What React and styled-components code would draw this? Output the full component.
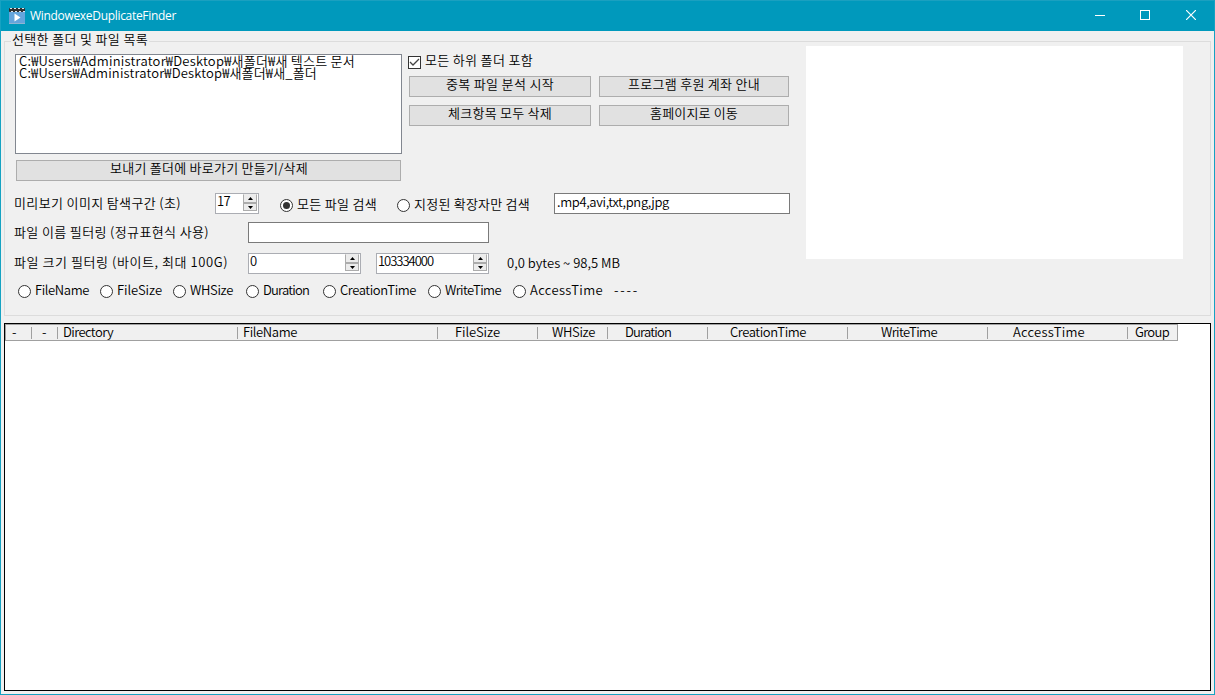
import React, { useLayoutEffect, useRef, useState } from "react"
import styled, { createGlobalStyle } from "styled-components"

const GlobalStyle = createGlobalStyle`
  * {
    box-sizing: border-box;
  }
  body {
    margin: 0;
    overflow: hidden;
    background: #f0f0f0;
    color: #000;
    font-family: "Noto Sans CJK KR", "Noto Sans", sans-serif;
    font-size: 13px;
    font-weight: 350;
    line-height: 16px;
  }
`

const Window = styled.div`
  width: 1215px;
  height: 695px;
  display: flex;
  flex-direction: column;
  background: #f0f0f0;
  border: 1px solid #16a2c2;
  border-top: none;
`
const TitleBar = styled.div`
  height: 31px;
  flex: none;
  display: flex;
  align-items: center;
  padding: 0 0 1px 8px;
  background: #0099bc;
  border-top: 1px solid #1aa0c0;
  color: #fff;
  font-family: "Open Sans", "Noto Sans", sans-serif;
  font-size: 12px;
  font-weight: 400;
`
const Title = styled.div`
  flex: 1;
  margin-left: 5px;
  padding-top: 1px;
`
const WindowButton = styled.div`
  width: 46px;
  height: 28px;
  display: flex;
  align-items: center;
  justify-content: center;
`
const CaptionIcon = styled.svg`
  display: block;
  margin-bottom: 1px;
`
const Client = styled.div`
  flex: 1;
  display: flex;
  flex-direction: column;
  padding: 1px 3px 3px;
`

const GroupBox = styled.fieldset`
  height: 284px;
  margin: 0 0 7px;
  padding: 0;
  border: 1px solid #dcdcdc;
`
const Legend = styled.legend`
  height: 19px;
  margin-left: 6px;
  padding: 0 1px;
  line-height: 13px;
`
const Panel = styled.div`
  display: flex;
`
const Controls = styled.div`
  width: 801px;
  display: flex;
  flex-direction: column;
`
const Preview = styled.div`
  width: 377px;
  height: 213px;
  margin-top: -5px;
  background: #fff;
`

const TopArea = styled.div`
  height: 142px;
  display: flex;
  padding: 3px 0 0 10px;
`
const ListColumn = styled.div`
  width: 387px;
  display: flex;
  flex-direction: column;
  gap: 6px;
`
const ListBox = styled.div`
  height: 100px;
  padding: 0 0 0 3px;
  background: #fff;
  border: 1px solid #828790;
`
const ListItem = styled.div`
  height: 12px;
  line-height: 12px;
`
const Button = styled.div`
  width: ${props => props.$width}px;
  height: 21px;
  display: flex;
  justify-content: center;
  background: #e1e1e1;
  border: 1px solid #adadad;
  line-height: 13px;
`
const SendToButton = styled(Button)`
  margin-left: 1px;
  padding-left: 1px;
`
const Actions = styled.div`
  padding: 2px 0 0 6px;
`
const CheckRow = styled.div`
  height: 20px;
  display: flex;
  gap: 4px;
  line-height: 8px;
`
const CheckMark = styled.svg`
  width: 13px;
  height: 13px;
  flex: none;
`
const ButtonGrid = styled.div`
  display: grid;
  grid-template-columns: 182px 190px;
  gap: 8px;
  margin-left: 1px;
`

const Row = styled.div`
  height: ${props => props.$height}px;
  display: flex;
  padding-left: 9px;
`
const Label = styled.div`
  width: ${props => props.$width}px;
  padding-top: ${props => props.$top || 0}px;
`
const TextBox = styled.div`
  width: ${props => props.$width}px;
  height: 21px;
  padding-left: 2px;
  background: #fff;
  border: 1px solid #7a7a7a;
`
const SpinBox = styled.div`
  width: ${props => props.$width}px;
  height: 21px;
  margin-right: ${props => props.$after}px;
  padding: 0 1px;
  display: flex;
  justify-content: space-between;
  background: #fff;
  border: 1px solid #abadb3;
  line-height: 13px;
`
const SpinButtons = styled.div`
  width: 14px;
  height: 17px;
`
const SpinButton = styled.div`
  height: ${props => (props.$up ? 9 : 8)}px;
  display: flex;
  align-items: center;
  justify-content: center;
  background: #ececec;
  border: 1px solid #acacac;
  border-top-color: ${props => (props.$up ? "#ececec" : "#acacac")};
`
const Option = styled.div`
  width: ${props => props.$width}px;
  display: flex;
  gap: 4px;
`
const OptionText = styled.div`
  margin-top: -3px;
`
const Circle = styled.div`
  width: 13px;
  height: 13px;
  flex: none;
  display: flex;
  align-items: center;
  justify-content: center;
  background: #fff;
  border: 1px solid #333;
  border-radius: 50%;
`
const Dot = styled.div`
  width: 7px;
  height: 7px;
  background: #333;
  border-radius: 50%;
`
const SearchOptions = styled.div`
  display: flex;
  padding-top: 6px;
`
const SortRow = styled(Row)`
  padding-left: 13px;
`

const Table = styled.div`
  height: 368px;
  background: #fff;
  border: 1px solid #000;
`
const TableHeader = styled.div`
  width: 1173px;
  height: 17px;
  display: flex;
  background: #f0f0f0;
  border: 1px solid #a0a0a0;
`
const HeaderCell = styled.div`
  width: ${props => props.$width}px;
  height: 12px;
  flex: none;
  margin-top: 2px;
  padding-left: ${props => props.$pad}px;
  border-right: ${props => (props.$last ? "none" : "1px solid #a0a0a0")};
  line-height: 9px;
`

const Fitted = styled.span`
  display: inline-block;
  white-space: pre;
`

// spreads the letters so that the text is exactly `width` pixels wide
const Fit = ({ width, children }) => {
  const ref = useRef(null)
  const [spacing, setSpacing] = useState(0)

  useLayoutEffect(() => {
    const natural = ref.current.getBoundingClientRect().width
    setSpacing((width - natural) / children.length)
  }, [])

  return (
    <Fitted ref={ref} style={{ letterSpacing: spacing }}>
      {children}
    </Fitted>
  )
}

const files = [
  { path: "C:₩Users₩Administrator₩Desktop₩새폴더₩새 텍스트 문서", width: 336 },
  { path: "C:₩Users₩Administrator₩Desktop₩새폴더₩새_폴더", width: 298 },
]

const actions = [
  { title: "중복 파일 분석 시작", width: 182, text: 108 },
  { title: "프로그램 후원 계좌 안내", width: 190, text: 132 },
  { title: "체크항목 모두 삭제", width: 182, text: 104 },
  { title: "홈페이지로 이동", width: 190, text: 88 },
]

const sortKeys = [
  { title: "FileName", width: 82, text: 54 },
  { title: "FileSize", width: 73, text: 45 },
  { title: "WHSize", width: 73, text: 43 },
  { title: "Duration", width: 77, text: 46 },
  { title: "CreationTime", width: 105, text: 76 },
  { title: "WriteTime", width: 85, text: 56 },
  { title: "AccessTime", width: 101, text: 73 },
]

const columns = [
  { title: "-", width: 26, pad: 6, text: 7 },
  { title: "-", width: 26, pad: 10, text: 7 },
  { title: "Directory", width: 180, pad: 5, text: 50 },
  { title: "FileName", width: 200, pad: 5, text: 54 },
  { title: "FileSize", width: 100, pad: 17, text: 45 },
  { title: "WHSize", width: 70, pad: 14, text: 43 },
  { title: "Duration", width: 100, pad: 17, text: 46 },
  { title: "CreationTime", width: 140, pad: 22, text: 76 },
  { title: "WriteTime", width: 140, pad: 33, text: 56 },
  { title: "AccessTime", width: 140, pad: 25, text: 72 },
  { title: "Group", width: 49, pad: 7, text: 34 },
]

const AppIcon = () => (
  <svg width="16" height="16" viewBox="0 0 16 16">
    <rect x="0" y="4" width="16" height="12" fill="#65a5dc" />
    <path d="M0 15.5h16" stroke="#8fb4d2" />
    <rect x="0" y="0" width="16" height="4" rx="1" fill="#303030" />
    <path d="M1 0.5h2M5 0.5h2M9 0.5h2M13 0.5h2M2 3.5h2M6 3.5h2M10 3.5h2M14 3.5h2" stroke="#dfe6ea" />
    <path d="M5.5 5.5v8l6-4z" fill="#fff" />
  </svg>
)

const Arrow = ({ up }) => (
  <svg width="5" height="3" viewBox="0 0 5 3">
    <path d={up ? "M0 3h5L2.5 0z" : "M0 0h5L2.5 3z"} fill="#000" />
  </svg>
)

const Spinner = ({ value, width, text, after }) => (
  <SpinBox $width={width} $after={after}>
    <Fit width={text}>{value}</Fit>
    <SpinButtons>
      <SpinButton $up>
        <Arrow up />
      </SpinButton>
      <SpinButton>
        <Arrow />
      </SpinButton>
    </SpinButtons>
  </SpinBox>
)

const Radio = ({ title, width, text, checked }) => (
  <Option $width={width}>
    <Circle>{checked ? <Dot /> : ""}</Circle>
    <OptionText>
      <Fit width={text}>{title}</Fit>
    </OptionText>
  </Option>
)

const Header = () => (
  <TitleBar>
    <AppIcon />
    <Title>
      <Fit width={146}>WindowexeDuplicateFinder</Fit>
    </Title>
    <WindowButton>
      <CaptionIcon width="12" height="10">
        <path d="M2 5.5h10" stroke="#fff" />
      </CaptionIcon>
    </WindowButton>
    <WindowButton>
      <CaptionIcon width="10" height="10">
        <rect x="0.5" y="0.5" width="9" height="9" fill="none" stroke="#fff" />
      </CaptionIcon>
    </WindowButton>
    <WindowButton>
      <CaptionIcon width="10" height="10">
        <path d="M0 0l10 10M10 0L0 10" stroke="#fff" strokeWidth="1.2" />
      </CaptionIcon>
    </WindowButton>
  </TitleBar>
)

const App = () => (
  <>
    <GlobalStyle />
    <Window>
      <Header />
      <Client>
        <GroupBox>
          <Legend>
            <Fit width={136}>선택한 폴더 및 파일 목록</Fit>
          </Legend>
          <Panel>
            <Controls>
              <TopArea>
                <ListColumn>
                  <ListBox>
                    {files.map(file => (
                      <ListItem key={file.path}>
                        <Fit width={file.width}>{file.path}</Fit>
                      </ListItem>
                    ))}
                  </ListBox>
                  <SendToButton $width={385}>
                    <Fit width={198}>보내기 폴더에 바로가기 만들기/삭제</Fit>
                  </SendToButton>
                </ListColumn>
                <Actions>
                  <CheckRow>
                    <CheckMark viewBox="0 0 13 13">
                      <rect x="0.5" y="0.5" width="12" height="12" fill="#fff" stroke="#333" />
                      <path d="M2 6l3 3 6-6" fill="none" stroke="#444" strokeWidth="1.3" />
                    </CheckMark>
                    <Fit width={108}>모든 하위 폴더 포함</Fit>
                  </CheckRow>
                  <ButtonGrid>
                    {actions.map(action => (
                      <Button key={action.title} $width={action.width}>
                        <Fit width={action.text}>{action.title}</Fit>
                      </Button>
                    ))}
                  </ButtonGrid>
                </Actions>
              </TopArea>

              <Row $height={29}>
                <Label $width={201} $top={2}>
                  <Fit width={167}>미리보기 이미지 탐색구간 (초)</Fit>
                </Label>
                <Spinner value="17" width={44} text={13} after={21} />
                <SearchOptions>
                  <Radio title="모든 파일 검색" width={117} text={80} checked />
                  <Radio title="지정된 확장자만 검색" width={157} text={116} />
                </SearchOptions>
                <TextBox $width={236}>
                  <Fit width={112}>.mp4,avi,txt,png,jpg</Fit>
                </TextBox>
              </Row>
              <Row $height={31}>
                <Label $width={234} $top={2}>
                  <Fit width={195}>파일 이름 필터링 (정규표현식 사용)</Fit>
                </Label>
                <TextBox $width={241} />
              </Row>
              <Row $height={32}>
                <Label $width={234} $top={1}>
                  <Fit width={214}>파일 크기 필터링 (바이트, 최대 100G)</Fit>
                </Label>
                <Spinner value="0" width={113} text={7} after={15} />
                <Spinner value="103334000" width={113} text={55} after={18} />
                <Label $width={120} $top={2}>
                  <Fit width={113}>0,0 bytes ~ 98,5 MB</Fit>
                </Label>
              </Row>
              <SortRow $height={16}>
                {sortKeys.map(key => (
                  <Radio key={key.title} {...key} />
                ))}
                <OptionText>
                  <Fit width={25}>----</Fit>
                </OptionText>
              </SortRow>
            </Controls>
            <Preview />
          </Panel>
        </GroupBox>
        <Table>
          <TableHeader>
            {columns.map((column, index) => (
              <HeaderCell
                key={index}
                $width={column.width}
                $pad={column.pad}
                $last={index === columns.length - 1}
              >
                <Fit width={column.text}>{column.title}</Fit>
              </HeaderCell>
            ))}
          </TableHeader>
        </Table>
      </Client>
    </Window>
  </>
)

export default App
